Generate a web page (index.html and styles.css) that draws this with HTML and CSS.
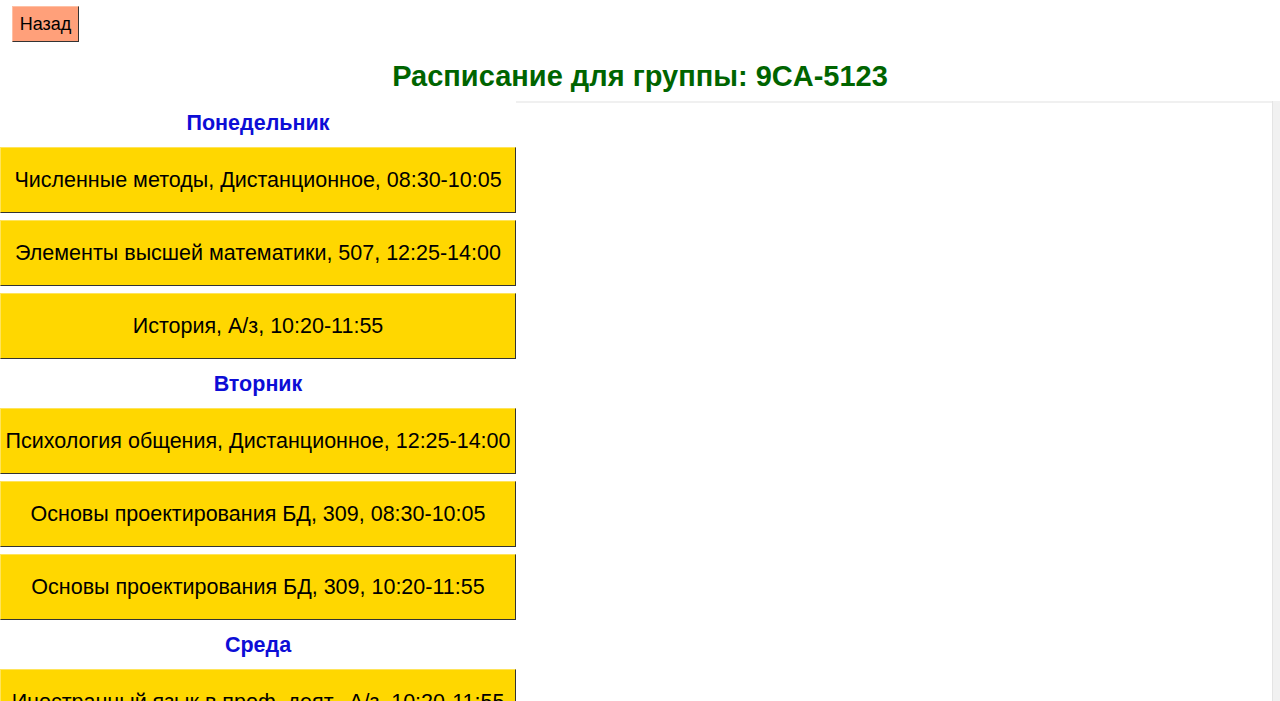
FILE: index.html
```html
<!DOCTYPE html>
<html lang="ru">
<head>
<meta charset="utf-8">
<title>Расписание</title>
<link rel="stylesheet" href="styles.css">
</head>
<body>
<div class="top">
  <button class="back">Назад</button>
</div>
<h1 class="title">Расписание для группы: 9CA-5123</h1>
<div class="main">
  <div class="days">
    <h2 class="day">Понедельник</h2>
    <button class="lesson">Численные методы, Дистанционное, 08:30-10:05</button>
    <button class="lesson">Элементы высшей математики, 507, 12:25-14:00</button>
    <button class="lesson">История, А/з, 10:20-11:55</button>
    <h2 class="day">Вторник</h2>
    <button class="lesson">Психология общения, Дистанционное, 12:25-14:00</button>
    <button class="lesson">Основы проектирования БД, 309, 08:30-10:05</button>
    <button class="lesson">Основы проектирования БД, 309, 10:20-11:55</button>
    <h2 class="day">Среда</h2>
    <button class="lesson">Иностранный язык в проф. деят., А/з, 10:20-11:55</button>
  </div>
  <div class="panel"></div>
  <div class="strip"></div>
</div>
</body>
</html>
```

FILE: styles.css
```css
html, body {
  margin: 0;
  padding: 0;
  background: #ffffff;
  font-family: "Liberation Sans", Arial, sans-serif;
  overflow: hidden;
  height: 701px;
}
.top {
  padding: 6px 0 0 12px;
  height: 36px;
}
.back {
  display: block;
  box-sizing: border-box;
  width: 67px;
  height: 36px;
  padding: 0;
  margin: 0;
  background: #ffa07a;
  font-family: "Liberation Sans", Arial, sans-serif;
  font-size: 18px;
  color: #000;
  border: 1px solid;
  border-color: #ffc0a4 #333333 #333333 #ffc0a4;
}
.title {
  margin: 18px 0 0 0;
  height: 32px;
  line-height: 32px;
  text-align: center;
  font-size: 29px;
  font-weight: bold;
  color: #006400;
}
.main {
  margin-top: 9px;
  display: flex;
  align-items: stretch;
  height: 600px;
}
.days {
  width: 516px;
  flex: none;
  padding-top: 4px;
  display: flex;
  flex-direction: column;
}
.day {
  margin: 6px 0 12px 0;
  height: 24px;
  line-height: 24px;
  text-align: center;
  font-size: 21.5px;
  font-weight: bold;
  color: #0d0dd6;
}
.lesson {
  display: block;
  flex: none;
  box-sizing: border-box;
  width: 516px;
  height: 66px;
  margin: 0 0 7px 0;
  padding: 0;
  background: #ffd700;
  font-family: "Liberation Sans", Arial, sans-serif;
  font-size: 21.5px;
  color: #000;
  white-space: nowrap;
  border: 1px solid;
  border-color: #ffe45a #333333 #333333 #ffe45a;
}
.panel {
  flex: 1;
  border-top: 2px solid #f0f0f0;
}
.strip {
  width: 7px;
  flex: none;
  background: #f1f1f1;
  border-left: 1px solid #e4e4e4;
}
```
